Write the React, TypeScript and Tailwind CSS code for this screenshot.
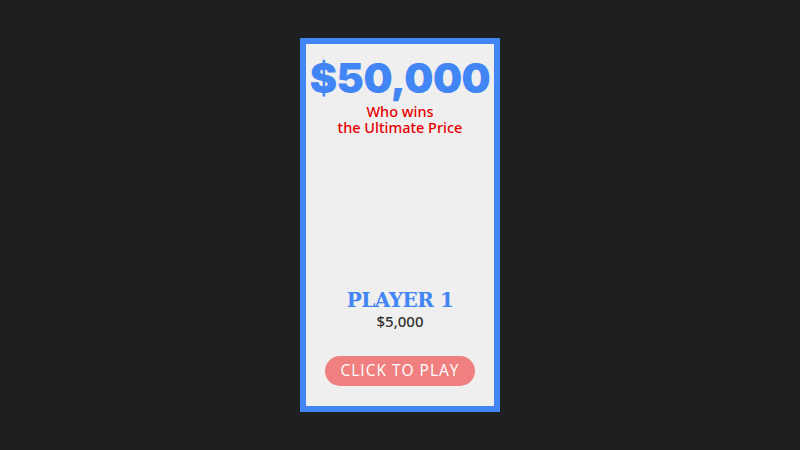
export default function App() {
  return (
    <div className="flex h-[450px] w-[800px] items-start justify-center bg-[#1e1f21] pt-[38px]">
      <div className="flex h-[374px] w-[200px] flex-col items-center border-[6px] border-[#4285f4] bg-[#efefef]">
        <div className="mt-[14px] text-[41px] font-black leading-[40px] tracking-[-0.5px] text-[#4285f4] [font-family:Inter,sans-serif]">
          $50,000
        </div>
        <div className="mt-[5px] text-center text-[14.5px] font-medium leading-[16px] text-[#e50000] [font-family:'Noto_Sans',sans-serif]">
          <div>Who wins</div>
          <div>the Ultimate Price</div>
        </div>
        <div className="flex-1" />
        <div className="text-[20px] font-bold leading-[22px] tracking-[-0.5px] text-[#4285f4] [font-family:'DejaVu_Serif',serif]">
          PLAYER 1
        </div>
        <div className="mt-[1px] text-[15px] font-medium leading-[18px] text-[#333] [font-family:'Noto_Sans',sans-serif]">
          $5,000
        </div>
        <button className="mb-[20px] mt-[26px] h-[30px] w-[150px] rounded-full bg-[#f08080] text-[15.5px] tracking-[1px] text-white [font-family:'Open_Sans',sans-serif]">
          CLICK TO PLAY
        </button>
      </div>
    </div>
  )
}
